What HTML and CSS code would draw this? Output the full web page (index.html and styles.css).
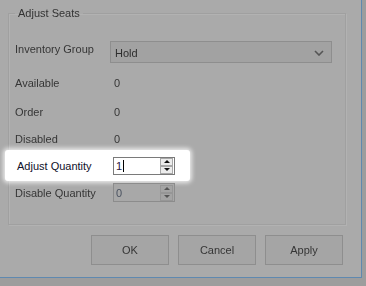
FILE: index.html
```html
<!DOCTYPE html>
<html>
<head>
<title>Adjust Seats</title>
<link rel="stylesheet" href="styles.css">
</head>
<body>
  <div class="window">
    <fieldset class="group">
      <legend class="dim">Adjust Seats</legend>

      <div class="row row-combo dim">
        <span class="label">Inventory Group</span>
        <div class="combo">
          <span>Hold</span>
          <svg class="chevron" width="10" height="6" viewBox="0 0 10 6"><path d="M1 1 L5 5 L9 1" fill="none" stroke="#555" stroke-width="1.6"/></svg>
        </div>
      </div>

      <div class="row row-available dim">
        <span class="label">Available</span>
        <span class="value">0</span>
      </div>
      <div class="row row-order dim">
        <span class="label">Order</span>
        <span class="value">0</span>
      </div>
      <div class="row row-disabled dim">
        <span class="label">Disabled</span>
        <span class="value">0</span>
      </div>

      <div class="row focus">
        <span class="label">Adjust Quantity</span>
        <div class="numeric">
          <span class="num-text">1<span class="caret"></span></span>
          <div class="spin">
            <div class="spin-btn"><span class="tri-up"></span></div>
            <div class="spin-btn"><span class="tri-down"></span></div>
          </div>
        </div>
      </div>

      <div class="row row-disable-qty dim">
        <span class="label">Disable Quantity</span>
        <div class="numeric numeric-off">
          <span class="num-text">0</span>
          <div class="spin">
            <div class="spin-btn"><span class="tri-up"></span></div>
            <div class="spin-btn"><span class="tri-down"></span></div>
          </div>
        </div>
      </div>
    </fieldset>

    <div class="buttons dim">
      <button class="btn">OK</button>
      <button class="btn">Cancel</button>
      <button class="btn">Apply</button>
    </div>
  </div>
</body>
</html>
```

FILE: styles.css
```css
body {
  margin: 0;
  padding: 0;
  background-color: #9d9d9d;
  font-family: "Liberation Sans", Arial, sans-serif;
  font-size: 11px;
  color: #363636;
}
.window {
  width: 362px;
  height: 278px;
  background-color: #aaaaaa;
  border-right: 1px solid #5f89b0;
  border-bottom: 1px solid #5f89b0;
  box-sizing: border-box;
  padding-top: 7px;
}
.dim {
  filter: blur(0.35px);
}
.group {
  margin: 0 0 0 8px;
  padding: 0;
  width: 338px;
  height: 218px;
  box-sizing: border-box;
  border: 1px solid #a0a0a0;
  box-shadow: 1px 1px 0 #b2b2b2, inset 1px 1px 0 #b2b2b2;
}
.group legend {
  margin-left: 6px;
  padding: 0 3px;
  color: #333;
  font-size: 11px;
  line-height: 13px;
}
.row {
  display: grid;
  grid-template-columns: 98px 1fr;
  align-items: center;
  padding-left: 6px;
}
.row-combo {
  margin-top: 21px;
  height: 22px;
  align-items: start;
}
.row-combo .label {
  margin-top: 2px;
}
.combo {
  margin-left: -3px;
  width: 222px;
  height: 22px;
  box-sizing: border-box;
  border: 1px solid #8e8e8e;
  background-color: #a2a2a2;
  display: flex;
  align-items: center;
  justify-content: space-between;
  padding: 1px 6px 0 4px;
  color: #2e2e2e;
}
.chevron {
  margin-right: 1px;
}
.value {
  padding-left: 1px;
}
.row-available {
  margin-top: 11px;
  height: 18px;
}
.row-order {
  margin-top: 11px;
  height: 18px;
}
.row-disabled {
  margin-top: 9px;
  height: 18px;
}
.focus {
  margin-top: 2px;
  margin-left: -4px;
  width: 173px;
  height: 31px;
  padding-left: 12px;
  grid-template-columns: 96px 1fr;
  background-color: #fff;
  border-radius: 3px;
  box-shadow: 0 0 4px 2px rgba(255, 255, 255, 0.75);
  color: #10102a;
}
.numeric {
  width: 62px;
  height: 18px;
  box-sizing: border-box;
  border: 1px solid #7a7a7a;
  background-color: #fff;
  display: flex;
  align-items: center;
  justify-content: space-between;
  padding-left: 2px;
}
.num-text {
  display: flex;
  align-items: center;
  color: #2a1540;
}
.caret {
  display: inline-block;
  width: 1px;
  height: 12px;
  background-color: #000;
  margin-left: 1px;
}
.spin {
  display: flex;
  flex-direction: column;
  gap: 0;
  margin-right: 1px;
}
.spin-btn {
  width: 13px;
  height: 8px;
  box-sizing: border-box;
  border: 1px solid #a8a8a8;
  background-color: #ececec;
  display: flex;
  align-items: center;
  justify-content: center;
}
.tri-up {
  width: 0;
  height: 0;
  border-left: 3px solid transparent;
  border-right: 3px solid transparent;
  border-bottom: 3px solid #111;
}
.tri-down {
  width: 0;
  height: 0;
  border-left: 3px solid transparent;
  border-right: 3px solid transparent;
  border-top: 3px solid #111;
}
.row-disable-qty {
  margin-top: 2px;
  height: 19px;
}
.numeric-off {
  height: 19px;
  background-color: #a8a8a8;
  border-color: #8c8c8c;
}
.numeric-off .num-text {
  color: #4a5260;
}
.numeric-off .spin-btn {
  background-color: #a4a4a4;
  border-color: #969696;
}
.numeric-off .tri-up {
  border-bottom-color: #555;
}
.numeric-off .tri-down {
  border-top-color: #555;
}
.buttons {
  display: flex;
  justify-content: flex-end;
  gap: 9px;
  margin-top: 10px;
  padding-right: 18px;
}
.btn {
  width: 78px;
  height: 30px;
  box-sizing: border-box;
  border: 1px solid #8e8e8e;
  background-color: #a5a5a5;
  font-family: "Liberation Sans", Arial, sans-serif;
  font-size: 11px;
  color: #363636;
  padding: 0;
}
```
